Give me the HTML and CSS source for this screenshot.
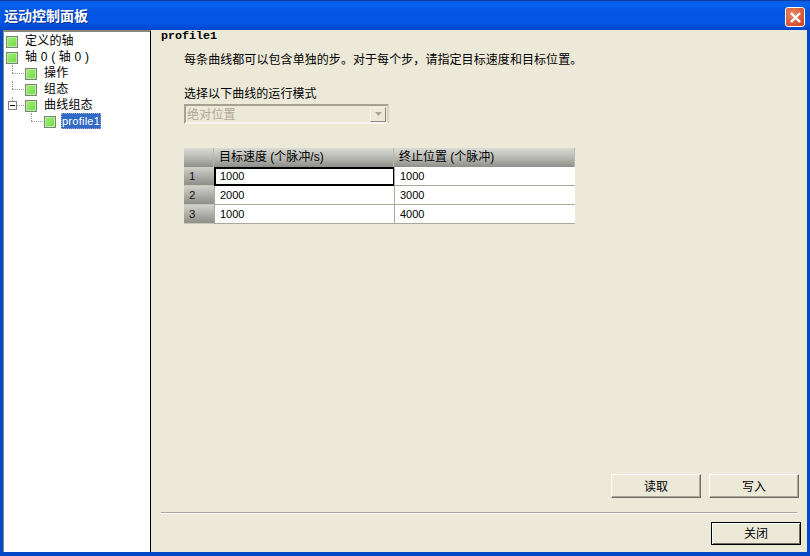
FILE: index.html
```html
<!DOCTYPE html>
<html lang="zh">
<head>
<meta charset="utf-8">
<title>运动控制面板</title>
<link rel="stylesheet" href="styles.css">
</head>
<body>
<div class="window">
  <header class="titlebar">
    <span class="title">运动控制面板</span>
    <button class="close" aria-label="关闭">
      <svg width="13" height="13" viewBox="0 0 13 13"><path d="M2 2l9 9M11 2l-9 9" stroke="#fff" stroke-width="2.4" fill="none"/></svg>
    </button>
  </header>
  <div class="client">
    <nav class="tree">
      <div class="node"><i class="ico"></i><span>定义的轴</span></div>
      <div class="node"><i class="ico"></i><span>轴 0 ( 轴 0 )</span></div>
      <div class="node l1 line"><i class="ico"></i><span>操作</span></div>
      <div class="node l1 line"><i class="ico"></i><span>组态</span></div>
      <div class="node l1 line"><b class="minus"></b><i class="ico"></i><span>曲线组态</span></div>
      <div class="node l2 line"><i class="ico"></i><span class="sel">profile1</span></div>
    </nav>
    <main class="panel">
      <h1 class="heading">profile1</h1>
      <p class="intro">每条曲线都可以包含单独的步。对于每个步，请指定目标速度和目标位置。</p>
      <label class="mode-label">选择以下曲线的运行模式</label>
      <div class="combo">
        <span class="combo-text">绝对位置</span>
        <span class="combo-btn"><svg width="7" height="4" viewBox="0 0 7 4"><path d="M0 0h7L3.5 4z" fill="#aca899"/></svg></span>
      </div>
      <div class="grid">
        <div class="gh"></div><div class="gh">目标速度 (个脉冲/s)</div><div class="gh">终止位置 (个脉冲)</div>
        <div class="gr">1</div><div class="gc active">1000</div><div class="gc">1000</div>
        <div class="gr">2</div><div class="gc">2000</div><div class="gc">3000</div>
        <div class="gr">3</div><div class="gc">1000</div><div class="gc">4000</div>
      </div>
      <div class="spacer"></div>
      <div class="actions">
        <button class="btn">读取</button>
        <button class="btn">写入</button>
      </div>
      <div class="rule"></div>
      <div class="footer"><button class="btn default">关闭</button></div>
    </main>
  </div>
</div>
</body>
</html>
```
FILE: styles.css
```css
* { box-sizing: border-box; }
html, body { margin: 0; height: 100%; }
body {
  width: 810px; height: 556px; overflow: hidden;
  font: 12px/16px "Liberation Sans", "Noto Sans CJK SC", sans-serif;
  color: #000;
}
.window {
  height: 556px; display: flex; flex-direction: column;
  background: #0348c8;
  padding: 0 3px 4px 3px;
}
.titlebar {
  height: 30px; margin: 0 -3px; padding: 1px 3px 0 4px;
  display: flex; align-items: center; justify-content: space-between;
  background: linear-gradient(#0a5ad8 0, #0662f0 3px, #0458e6 8px, #0355e4 22px, #0348d0 28px, #0a3fb8 30px);
  border-top: 1px solid #0a3fa8;
}
.title {
  color: #fff; font-weight: bold; font-size: 14px;
  text-shadow: 1px 1px 0 #0a2f90;
}
.close {
  width: 20px; height: 20px; padding: 0; margin: 2px 2px 0 0;
  display: flex; align-items: center; justify-content: center;
  background: radial-gradient(circle at 35% 35%, #ea8a68, #d9512c 70%, #c83f1e);
  border: 1px solid #fff; border-radius: 3px;
}
.client { flex: 1; display: flex; background: #ece9d8; min-height: 0; }
.tree {
  width: 148px; background: #fff; padding: 1px 0 0 2px;
  border-top: 2px solid #8a887c; border-left: 1px solid #8a887c;
  border-right: 1px solid #000;
  flex: none;
}
.node { height: 16px; display: flex; align-items: center; position: relative; white-space: nowrap; letter-spacing: .2px; }
.node .ico { margin-right: 7px; }
.l1 { padding-left: 19px; }
.l2 { padding-left: 38px; }
.node.l2 .ico { margin-right: 5px; }
.line::before {
  content: ""; position: absolute; left: 6px; top: 8px; width: 12px; height: 0;
  border-top: 1px dotted #999;
}
.line::after {
  content: ""; position: absolute; left: 6px; top: 0; height: 8px; width: 0;
  border-left: 1px dotted #999;
}
.l2::before { left: 25px; width: 12px; }
.l2::after { left: 25px; }
.ico {
  flex: none; width: 12px; height: 12px; align-self: flex-start; margin-top: 3px;
  border: 1px solid #6f8a68;
  background: linear-gradient(135deg, #9cf06c, #74dc4c);
  box-shadow: inset 0 0 0 1px #c2e6ae;
}
.minus {
  position: absolute; z-index: 1; left: 2px; top: 4px; width: 9px; height: 9px;
  border: 1px solid #808080; background: #fff;
}
.minus::after {
  content: ""; position: absolute; left: 1px; top: 3px; width: 5px; height: 1px; background: #000;
}
.sel {
  background: #316ac5; color: #fff; padding: 0 1px; height: 16px; line-height: 16px;
  font-size: 11px; outline: 1px dotted #aac; outline-offset: -1px; letter-spacing: .25px;
}
.panel {
  flex: 1; min-width: 0; display: flex; flex-direction: column;
  padding: 0 6px 7px 10px;
}
.heading {
  margin: 0; height: 15px; font: bold 11.67px/13px "Liberation Mono", monospace;
}
.intro { margin: 7px 0 0 23px; height: 16px; letter-spacing: .07px; }
.mode-label { display: block; margin: 18px 0 0 23px; height: 17px; line-height: 17px; letter-spacing: .05px; }
.combo {
  margin: 1px 0 0 23px; width: 205px; height: 20px;
  display: flex; align-items: center; justify-content: space-between;
  border: 2px solid #a5a294; border-right-color: #d6d3c6; border-bottom-color: #f6f5ee;
  color: #aca899; padding: 0 1px;
}
.combo-text { letter-spacing: .2px; padding-top: 1px; }
.combo-btn {
  width: 16px; height: 15px; display: flex; align-items: center; justify-content: center;
  background: #ece9d8; border: 1px solid; border-color: #f5f4ec #8a887c #8a887c #f5f4ec;
}
.grid {
  margin: 24px 0 0 23px; width: 391px;
  display: grid; grid-template-columns: 30px 180px 181px; grid-template-rows: 19px 19px 19px 19px;
  background: #aca899; border: solid #aca899; border-width: 0 1px 0 0;
}
.gh {
  background: linear-gradient(#dbdbd6, #b6b6b0 55%, #8f8f8a);
  padding: 1px 0 0 5px; border-right: 1px solid #bbb9ab; white-space: nowrap;
}
.gr {
  background: linear-gradient(#d2d2cc, #a8a8a2 60%, #8f8f8a);
  padding-left: 5px; line-height: 18px; color: #111; font-size: 11.5px;
  border-bottom: 1px solid #c8c6b8;
}
.gc {
  background: #fff; padding-left: 5px; line-height: 18px; font-size: 11px;
  border-left: 1px solid #aca899; border-bottom: 1px solid #aca899;
}
.gc.active { border: 2px solid #000; border-right-width: 1px; padding-left: 4px; line-height: 15px; }
.spacer { flex: 1; }
.actions { display: flex; justify-content: flex-end; gap: 8px; margin-right: 2px; }
.btn {
  width: 90px; height: 24px; padding: 0 0 2px;
  font: 12px "Liberation Sans", "Noto Sans CJK SC", sans-serif; color: #000;
  background: #ece9d8;
  border: 1px solid; border-color: #fff #716f64 #716f64 #fff;
  box-shadow: inset -1px -1px 0 #aca899;
}
.rule { margin: 14px 4px 0 0; height: 2px; border-top: 1px solid #aca899; border-bottom: 1px solid #fff; }
.footer { margin-top: 8px; display: flex; justify-content: flex-end; }
.default { height: 23px; border: 1px solid #000; box-shadow: inset 1px 1px 0 #fff, inset -1px -1px 0 #716f64; }
```
